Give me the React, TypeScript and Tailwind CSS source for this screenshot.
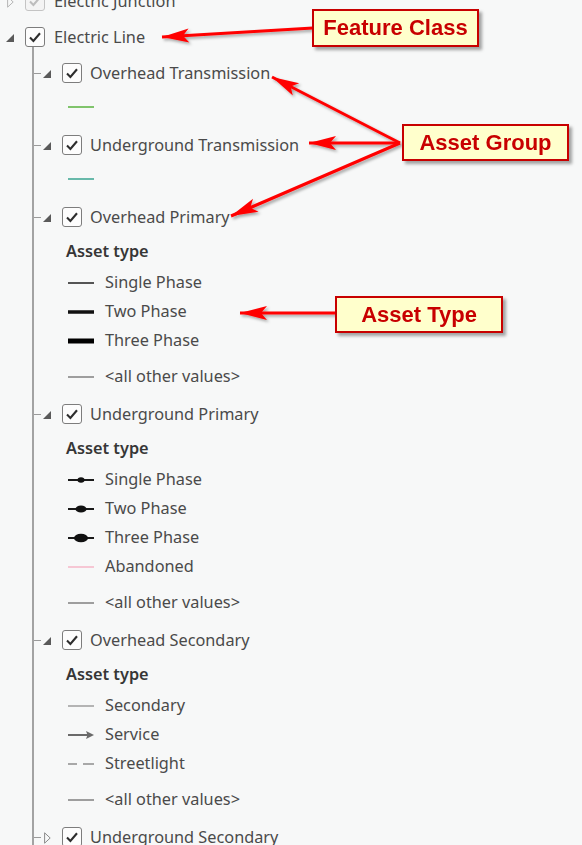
import React from "react";

const FONT = { fontFamily: '"Noto Sans", "Open Sans", sans-serif' };

function Check({ dim = false }: { dim?: boolean }) {
  return (
    <div
      className={
        "w-[20px] h-[20px] shrink-0 rounded-[3px] border flex items-center justify-center " +
        (dim ? "border-[#c4c4c4] bg-[#f4f4f4]" : "border-[#7d7d7d] bg-[#fdfdfd]")
      }
    >
      <svg width="16" height="16" viewBox="0 0 16 16">
        <path
          d="M3 8.6 L6.4 11.9 L13 4.3"
          fill="none"
          stroke={dim ? "#bdbdbd" : "#2e2e2e"}
          strokeWidth="2.1"
        />
      </svg>
    </div>
  );
}

function Expanded() {
  return (
    <svg width="8" height="8" viewBox="0 0 8 8" className="shrink-0">
      <polygon points="8,0 8,8 0,8" fill="#5a5a5a" />
    </svg>
  );
}

function Collapsed({ light = false }: { light?: boolean }) {
  return (
    <svg width="7" height="12" viewBox="0 0 7 12" className="shrink-0">
      <polygon points="0.6,0.8 6.2,6 0.6,11.2" fill="none" stroke={light ? "#b5b5b5" : "#8a8a8a"} strokeWidth="1" />
    </svg>
  );
}

function FeatureRow({ label, dim = false, open = true }: { label: string; dim?: boolean; open?: boolean }) {
  return (
    <div className="h-[36px] flex items-center pl-[6px]">
      <div className="w-[8px] flex items-center justify-center pt-[2px]">
        {open ? <Expanded /> : <Collapsed light={dim} />}
      </div>
      <div className="ml-[11px]">
        <Check dim={dim} />
      </div>
      <span className="ml-[9px] text-[16.3px] text-[#4a4a4a] whitespace-nowrap">{label}</span>
    </div>
  );
}

function GroupHeader({ label, open = true }: { label: string; open?: boolean }) {
  return (
    <div className="h-[36px] flex items-center">
      <div className="w-[7px] h-px bg-[#9a9a9a]" />
      <div className="ml-[2px] w-[8px] flex items-center justify-center pt-[2px]">
        {open ? <Expanded /> : <Collapsed />}
      </div>
      <div className="ml-[11px]">
        <Check />
      </div>
      <span className="ml-[8px] text-[16.3px] text-[#4a4a4a] whitespace-nowrap">{label}</span>
    </div>
  );
}

type Sw =
  | { kind: "line"; color: string; w: number }
  | { kind: "dot"; rx: number; ry: number }
  | { kind: "arrow" }
  | { kind: "dash" };

function Swatch({ s }: { s: Sw }) {
  return (
    <svg width="28" height="16" viewBox="0 0 28 16" className="shrink-0">
      {s.kind === "line" && <line x1="0" y1="8" x2="26" y2="8" stroke={s.color} strokeWidth={s.w} />}
      {s.kind === "dot" && (
        <>
          <line x1="0" y1="8" x2="26" y2="8" stroke="#1a1a1a" strokeWidth="2" />
          <ellipse cx="13" cy="8" rx={s.rx} ry={s.ry} fill="#111" />
        </>
      )}
      {s.kind === "arrow" && (
        <>
          <line x1="0" y1="8" x2="20" y2="8" stroke="#6a6a6a" strokeWidth="2" />
          <polygon points="26,8 18,4 19.5,8 18,12" fill="#6a6a6a" />
        </>
      )}
      {s.kind === "dash" && (
        <>
          <line x1="0" y1="8" x2="9" y2="8" stroke="#a8a8a8" strokeWidth="2" />
          <line x1="15" y1="8" x2="26" y2="8" stroke="#a8a8a8" strokeWidth="2" />
        </>
      )}
    </svg>
  );
}

function Item({ s, label, extra = false }: { s: Sw; label: string; extra?: boolean }) {
  return (
    <div className={"h-[29px] flex items-center pl-[34px] " + (extra ? "mt-[7px]" : "")}>
      <Swatch s={s} />
      <span className="ml-[9px] text-[16.3px] text-[#4a4a4a] whitespace-nowrap">{label}</span>
    </div>
  );
}

function AssetHeading() {
  return (
    <div className="h-[33px] flex items-center pl-[32px]">
      <span className="text-[16.3px] font-semibold text-[#363636]">Asset type</span>
    </div>
  );
}

function SimpleGroup({ label, color }: { label: string; color: string }) {
  return (
    <div className="mb-[5px]">
      <GroupHeader label={label} />
      <div className="h-[31px] flex items-center pl-[34px]">
        <Swatch s={{ kind: "line", color, w: 2 }} />
      </div>
    </div>
  );
}

function TypedGroup({ label, items }: { label: string; items: { s: Sw; label: string; extra?: boolean }[] }) {
  return (
    <div className="mb-[5px]">
      <GroupHeader label={label} />
      <AssetHeading />
      {items.map((it, i) => (
        <Item key={i} s={it.s} label={it.label} extra={it.extra} />
      ))}
    </div>
  );
}

function Callout({ text, className }: { text: string; className: string }) {
  return (
    <div
      className={
        "absolute flex items-center justify-center bg-[#ffffcc] border-2 border-[#c80000] shadow-[3px_3px_3px_rgba(0,0,0,0.35)] " +
        className
      }
    >
      <span
        className="text-[22px] font-bold text-[#c80000] leading-none"
        style={{ fontFamily: '"Liberation Sans", Arial, sans-serif' }}
      >
        {text}
      </span>
    </div>
  );
}

function Arrow({ x1, y1, x2, y2 }: { x1: number; y1: number; x2: number; y2: number }) {
  const ang = (Math.atan2(y2 - y1, x2 - x1) * 180) / Math.PI;
  return (
    <g>
      <line x1={x1} y1={y1} x2={x2} y2={y2} stroke="#ff0000" strokeWidth="3" />
      <g transform={`translate(${x2} ${y2}) rotate(${ang})`}>
        <polygon points="0,0 -27,-7 -21,0 -27,7" fill="#ff0000" />
      </g>
    </g>
  );
}

export default function App() {
  const G = 400,
    GY = 143;
  return (
    <div className="relative w-[582px] h-[845px] overflow-hidden bg-[#f7f8f8]" style={FONT}>
      <div className="-mt-[17px]">
        <FeatureRow label="Electric Junction" dim open={false} />
        <FeatureRow label="Electric Line" />
        <div className="ml-[32px] -mt-[8px] pt-[8px] border-l-2 border-[#a3a3a3]">
          <SimpleGroup label="Overhead Transmission" color="#80c46c" />
          <SimpleGroup label="Underground Transmission" color="#68b9aa" />
          <TypedGroup
            label="Overhead Primary"
            items={[
              { s: { kind: "line", color: "#555555", w: 2 }, label: "Single Phase" },
              { s: { kind: "line", color: "#111111", w: 3.5 }, label: "Two Phase" },
              { s: { kind: "line", color: "#000000", w: 5 }, label: "Three Phase" },
              { s: { kind: "line", color: "#9e9e9e", w: 2 }, label: "<all other values>", extra: true },
            ]}
          />
          <TypedGroup
            label="Underground Primary"
            items={[
              { s: { kind: "dot", rx: 3.5, ry: 2.8 }, label: "Single Phase" },
              { s: { kind: "dot", rx: 5.5, ry: 3.6 }, label: "Two Phase" },
              { s: { kind: "dot", rx: 7, ry: 4.3 }, label: "Three Phase" },
              { s: { kind: "line", color: "#f6b7c9", w: 1.5 }, label: "Abandoned" },
              { s: { kind: "line", color: "#9e9e9e", w: 2 }, label: "<all other values>", extra: true },
            ]}
          />
          <TypedGroup
            label="Overhead Secondary"
            items={[
              { s: { kind: "line", color: "#b4b4b4", w: 2 }, label: "Secondary" },
              { s: { kind: "arrow" }, label: "Service" },
              { s: { kind: "dash" }, label: "Streetlight" },
              { s: { kind: "line", color: "#9e9e9e", w: 2 }, label: "<all other values>", extra: true },
            ]}
          />
          <GroupHeader label="Underground Secondary" open={false} />
        </div>
      </div>

      <svg className="absolute inset-0 pointer-events-none" width="582" height="845" viewBox="0 0 582 845">
        <defs>
          <filter id="sh" x="-10%" y="-10%" width="130%" height="130%">
            <feDropShadow dx="2" dy="2" stdDeviation="1.4" floodColor="#000" floodOpacity="0.35" />
          </filter>
        </defs>
        <g filter="url(#sh)">
          <Arrow x1={313} y1={28} x2={162} y2={37} />
          <Arrow x1={G} y1={GY} x2={272} y2={77} />
          <Arrow x1={G} y1={GY} x2={309} y2={143} />
          <Arrow x1={G} y1={GY} x2={231} y2={216} />
          <Arrow x1={336} y1={313} x2={240} y2={313} />
        </g>
      </svg>

      <Callout text="Feature Class" className="left-[312px] top-[9px] w-[167px] h-[38px]" />
      <Callout text="Asset Group" className="left-[402px] top-[124px] w-[167px] h-[37px]" />
      <Callout text="Asset Type" className="left-[335px] top-[296px] w-[168px] h-[37px]" />
    </div>
  );
}
